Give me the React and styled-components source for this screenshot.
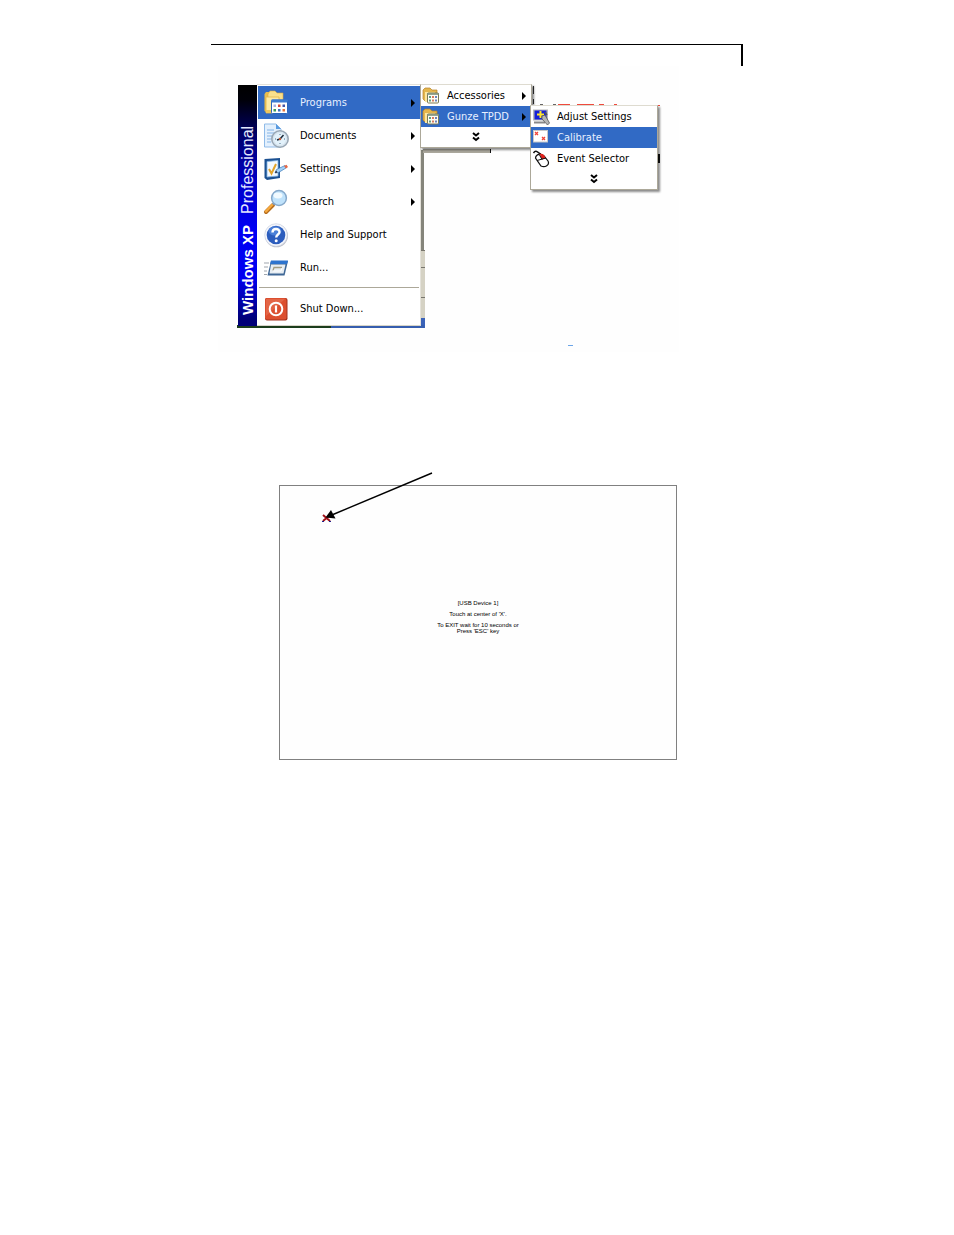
import styled, { createGlobalStyle } from "styled-components";

const ProgramsIcon = () => (
  <svg viewBox="0 0 26 26" aria-hidden="true">
    <path d="M1.500 4 L3 2 H8 L10 4 H12 V22 H3 L1.500 21 Z" fill="#e8bd4e" />
    <path d="M5 4 L7 1 H12 L14 3 H20 V16 H5 Z" fill="#f9e08c" stroke="#dba93c" strokeWidth="0.6" />
    <path d="M3 7 H16 V23 H3 Z" fill="#fdeaa4" stroke="#e2b54a" strokeWidth="0.8" />
    <path d="M3 20 L16 20 V23 H3 Z" fill="#f0c75d" />
    <rect x="8.500" y="10" width="16" height="13.500" rx="1" fill="#fff" stroke="#2c66bd" strokeWidth="1" />
    <rect x="8.500" y="9.500" width="16" height="3" fill="#3c7bd2" />
    <rect x="10.500" y="14.500" width="2.500" height="2.500" fill="#a9b1e6" />
    <rect x="15" y="14.500" width="2.500" height="2.500" fill="#d3473a" />
    <rect x="19.500" y="14.500" width="2.500" height="2.500" fill="#4456a8" />
    <rect x="10.500" y="19" width="2.500" height="2.500" fill="#3f9a55" />
    <rect x="15" y="19" width="2.500" height="2.500" fill="#3f6fc0" />
    <rect x="19.500" y="19" width="2.500" height="2.500" fill="#e6733a" />
  </svg>
);

const DocumentsIcon = () => (
  <svg viewBox="0 0 26 26" aria-hidden="true">
    <path d="M1.500 1 H13 L18 6 V24 H1.500 Z" fill="#e3f0fd" stroke="#90bbe8" strokeWidth="1" />
    <path d="M13 1 V6 H18 Z" fill="#5a9be0" />
    <path d="M4 7 H11 M4 10 H14 M4 13 H10 M4 16 H8 M4 19 H8" stroke="#86b4e6" strokeWidth="1.200" />
    <circle cx="17" cy="16" r="8.200" fill="#d8e5ef" stroke="#9aa8b5" strokeWidth="1.600" />
    <circle cx="17" cy="16" r="6" fill="#e3f2fb" />
    <path d="M17 11 V12 M17 20 V21 M12 16 H13 M21 16 H22" stroke="#52708b" strokeWidth="1" />
    <path d="M20.500 12 L17 16 L14 17" fill="none" stroke="#1d2c3c" strokeWidth="1.500" />
    <circle cx="17" cy="16" r="1.200" fill="#c25b35" />
  </svg>
);

const SettingsIcon = () => (
  <svg viewBox="0 0 26 26" aria-hidden="true">
    <path d="M1.500 3 L17 2 V22 L4 24 L1.500 22 Z" fill="#1c5192" />
    <path d="M4 5.500 L15 4.500 V20 L4 21 Z" fill="#f5faff" stroke="#82b2e3" strokeWidth="0.800" />
    <path d="M6 13 L8.500 17.500 L13 8" fill="none" stroke="#e2a52c" strokeWidth="2" />
    <path d="M12 17 L13.500 13.500 L22 9.500 L23 12 L15.500 16.500 Z" fill="#a3d0f7" stroke="#3978b8" strokeWidth="0.700" />
    <path d="M21 10 L23.500 8.800 L25 11 L23 12.500 Z" fill="#e66845" />
    <path d="M12 17 L13 14.500 L14.500 16.500 Z" fill="#223" />
  </svg>
);

const SearchIcon = () => (
  <svg viewBox="0 0 26 26" aria-hidden="true">
    <path d="M3 23 L10 16" stroke="#b46c1d" strokeWidth="4" strokeLinecap="round" />
    <path d="M3 22.400 L9.500 15.500" stroke="#f6a93e" strokeWidth="2.400" strokeLinecap="round" />
    <path d="M10 15.500 L12 13.500" stroke="#8495a8" strokeWidth="3" />
    <circle cx="16" cy="9" r="7.400" fill="#bfe2fb" stroke="#86a9cb" strokeWidth="1.500" />
    <ellipse cx="15" cy="6.500" rx="4.500" ry="3" fill="#f1faff" />
  </svg>
);

const HelpIcon = () => (
  <svg viewBox="0 0 26 26" aria-hidden="true">
    <circle cx="13.500" cy="13.800" r="11.500" fill="#c0c3cb" />
    <circle cx="13" cy="13" r="11.300" fill="#f4f6fb" stroke="#c4cbdc" strokeWidth="0.600" />
    <circle cx="13" cy="13" r="9.300" fill="#2c5dbd" />
    <ellipse cx="12" cy="9" rx="6.500" ry="4.500" fill="#4b80d8" />
    <path d="M9.500 10.500 C9.500 5.800 16.500 6 16.500 10 C16.500 12.500 13.200 12.500 13.200 15.500" fill="none" stroke="#fff" strokeWidth="2.400" />
    <circle cx="13.200" cy="18.800" r="1.500" fill="#fff" />
  </svg>
);

const RunIcon = () => (
  <svg viewBox="0 0 26 26" aria-hidden="true">
    <path d="M1 8 H6 M1 12 H5 M1 16 H4 M1 19.500 H4" stroke="#9fa5ad" strokeWidth="1.200" />
    <path d="M8 6 H25 L21.500 20.500 H4.500 Z" fill="#3e6796" />
    <path d="M8 5.500 H25 L24 9 H7 Z" fill="#2c73ce" />
    <path d="M8 9.500 H22.500 L20.500 18.500 H6.500 Z" fill="#e7edf2" />
    <path d="M10 15.500 L11 12.500 H19" fill="none" stroke="#a19c83" strokeWidth="1.300" />
    <path d="M10 16 H18 L19 13" fill="none" stroke="#fff" strokeWidth="1" />
  </svg>
);

const ShutDownIcon = () => (
  <svg viewBox="0 0 26 26" aria-hidden="true">
    <rect x="2" y="2" width="22.500" height="22.500" rx="2" fill="#a5311c" />
    <rect x="2" y="2" width="21.500" height="21.500" rx="2" fill="#dc4f2f" />
    <path d="M3 3 H22 L3 20 Z" fill="#e87556" opacity="0.600" />
    <circle cx="13" cy="13" r="6.300" fill="none" stroke="#fff" strokeWidth="2" />
    <path d="M13 9.500 V16.500" stroke="#fff" strokeWidth="2.200" />
  </svg>
);

const FolderIcon = () => (
  <svg viewBox="0 0 18 18" aria-hidden="true">
    <path d="M1 3 L3 1 H8 L10 3 H15 V14 H3 L1 12 Z" fill="#e4b64d" stroke="#b4822b" strokeWidth="0.700" />
    <path d="M3 5 H13 V15 H3 Z" fill="#fce7a0" />
    <rect x="5.500" y="6" width="11" height="10" rx="1" fill="#fffef2" stroke="#7c7a55" strokeWidth="1" />
    <path d="M5 7 H17" stroke="#7e8f78" strokeWidth="1.600" />
    <path d="M8 9 V11 M8 12.500 V14.500" stroke="#37866a" strokeWidth="1.600" />
    <path d="M11 9 V11 M11 12.500 V14.500" stroke="#cf5c3d" strokeWidth="1.600" />
    <path d="M14 9 V11 M14 12.500 V14.500" stroke="#4567b5" strokeWidth="1.600" />
  </svg>
);

const AdjustIcon = () => (
  <svg viewBox="0 0 18 18" aria-hidden="true">
    <rect x="1" y="1.500" width="15" height="11" fill="#b9b9b9" />
    <rect x="2.500" y="2.500" width="12" height="9" fill="#1520d6" />
    <path d="M2 14.500 H13" stroke="#888" strokeWidth="2" />
    <path d="M8.500 3 V10 M5 6.500 H12" stroke="#ffe52e" strokeWidth="2" />
    <path d="M10 8 L13 7 L17.500 15 L15.500 17 L10 11 Z" fill="#b5b5b5" stroke="#555" strokeWidth="0.800" />
    <path d="M13 4 L15 7" stroke="#555" strokeWidth="1.400" />
  </svg>
);

const CalibrateIcon = () => (
  <svg viewBox="0 0 18 18" aria-hidden="true">
    <rect x="1" y="1" width="15" height="12.500" fill="#c8c8c8" />
    <rect x="2" y="2" width="13" height="10.500" fill="#fff" />
    <path d="M3 3 L6 6 M6 3 L3 6 M10 8 L13 11 M13 8 L10 11" stroke="#f04438" strokeWidth="1.300" />
  </svg>
);

const EventIcon = () => (
  <svg viewBox="0 0 18 18" aria-hidden="true">
    <path d="M1.500 3 C4 -1 6 3 9 4" fill="none" stroke="#111" strokeWidth="1.500" />
    <path d="M3.500 8 C4 4 9 3 12 6 L16 11 C18 15 13 18 9 16 Z" fill="#fff" stroke="#111" strokeWidth="1.200" />
    <path d="M7.500 4 C10 3 12.500 4.500 13.500 8 L10 9.500 Z" fill="#e0221c" />
    <path d="M5 10.500 L14 8 M7.500 5 L10 9.500" stroke="#111" strokeWidth="1" />
  </svg>
);

const DoubleChevron = () => (
  <svg width="8" height="10" viewBox="0 0 8 10" aria-hidden="true">
    <path d="M1 1 L4 3.500 L7 1 M1 5.500 L4 8 L7 5.500" fill="none" stroke="#000" strokeWidth="2" />
  </svg>
);

const mainItems = [
  { label: "Documents", Icon: DocumentsIcon, more: true },
  { label: "Settings", Icon: SettingsIcon, more: true },
  { label: "Search", Icon: SearchIcon, more: true },
  { label: "Help and Support", Icon: HelpIcon },
  { label: "Run...", Icon: RunIcon },
];

const gunzeItems = [
  { label: "Adjust Settings", Icon: AdjustIcon },
  { label: "Calibrate", Icon: CalibrateIcon, active: true },
  { label: "Event Selector", Icon: EventIcon },
];

const MenuItem = ({ label, Icon, more, active, small, children }) => {
  return (
    <Item>
      <ItemButton type="button" $active={active} $small={small}>
        <IconBox $small={small}>
          <Icon />
        </IconBox>
        <span>{label}</span>
        {more && <Arrow />}
      </ItemButton>
      {children}
    </Item>
  );
};

const MoreButton = () => (
  <Item>
    <Expand type="button" aria-label="Show more">
      <DoubleChevron />
    </Expand>
  </Item>
);

// pieces of the desktop still showing around the menus
const Desktop = () => (
  <Backdrop viewBox="0 0 468 286" aria-hidden="true">
    <rect x="7" y="0" width="461" height="286" fill="#fefefe" />
    <rect x="210" y="84" width="3" height="100" fill="#85857b" />
    <rect x="210" y="184" width="4" height="68" fill="#d5d2c4" />
    <path d="M210 184.500 H214 M210 201.500 H214 M210 231.500 H214" stroke="#77756c" />
    <rect x="210" y="252" width="4" height="10" fill="#3a62b8" />
    <rect x="26" y="259" width="94" height="3" fill="#1c3d1c" />
    <rect x="120" y="259" width="93" height="3" fill="#365eae" />
    <rect x="212" y="83" width="68" height="4" fill="#aaa79c" />
    <rect x="279" y="83" width="1" height="4" fill="#111" />
    <path d="M295 18.500 H315" stroke="#99978c" />
    <path d="M322.500 20 V28 M322.500 33 V38" stroke="#333" />
    <path d="M329 38.500 H332 M342 38.500 H345" stroke="#666" />
    <path d="M347 38.500 H359 M366 38.500 H383 M388 38.500 H393 M403 38.500 H406 M444 39.500 H449" stroke="#ef4a3d" />
    <path d="M448 88 V97" stroke="#111" strokeWidth="2" />
    <rect x="357" y="279" width="5" height="1" fill="#6ba5e8" />
  </Backdrop>
);

const App = () => {
  return (
    <>
      <GlobalStyle />
      <Page>
        <TopRule />

        <MenuFigure>
          <Desktop />
          <StartMenu>
            <Banner>
              <BannerText>
                <strong>Windows XP</strong>
                <span>Professional</span>
              </BannerText>
            </Banner>
            <MainList>
              <MenuItem label="Programs" Icon={ProgramsIcon} more active>
                <SubMenu $width={112} $top={-2}>
                  <MenuItem label="Accessories" Icon={FolderIcon} more small />
                  <MenuItem label="Gunze TPDD" Icon={FolderIcon} more small active>
                    <SubMenu $width={128} $top={-1} $overlap={1}>
                      {gunzeItems.map((curItem) => {
                        return <MenuItem key={curItem.label} {...curItem} small />;
                      })}
                      <MoreButton />
                    </SubMenu>
                  </MenuItem>
                  <MoreButton />
                </SubMenu>
              </MenuItem>
              {mainItems.map((curItem) => {
                return <MenuItem key={curItem.label} {...curItem} />;
              })}
              <Separator />
              <MenuItem label="Shut Down..." Icon={ShutDownIcon} />
            </MainList>
          </StartMenu>
        </MenuFigure>

        <Calibration>
          <Pointer viewBox="0 0 160 50" width="160" height="50" aria-hidden="true">
            <path d="M44 31 L51 37 M51 31 L44 37" stroke="#a01018" strokeWidth="2" />
            <path d="M43 37.500 H45 M50 37.500 H52" stroke="#20208a" />
            <path d="M153 -11 L54 30.500" stroke="#000" strokeWidth="1.400" />
            <path d="M46.500 33.500 L52 26 L56.500 34.500 Z" fill="#000" />
          </Pointer>
          <p>[USB Device 1]</p>
          <p>Touch at center of 'X'.</p>
          <p>
            To EXIT wait for 10 seconds or
            <br />
            Press 'ESC' key
          </p>
        </Calibration>
      </Page>
    </>
  );
};

const GlobalStyle = createGlobalStyle`
  * {
    box-sizing: border-box;
  }

  body {
    margin: 0;
    background: #fff;
    color: #000;
    font-family: "DejaVu Sans Condensed", "DejaVu Sans", sans-serif;
    font-size: 11px;
  }
`;

const Page = styled.main`
  width: 100%;
  max-width: 532px;
  min-height: 100vh;
  margin: 0 auto;
  padding-top: 44px;
`;

const TopRule = styled.div`
  height: 22px;
  border-top: 1px solid #000;
  border-right: 2px solid #000;
`;

const MenuFigure = styled.section`
  position: relative;
  padding: 18px 0 24px 27px;
`;

const Backdrop = styled.svg`
  position: absolute;
  top: 0;
  left: 0;
  width: 468px;
  height: 286px;
`;

const StartMenu = styled.nav`
  position: relative;
  display: grid;
  grid-template-columns: 19px 1fr;
  width: 183px;
`;

const Banner = styled.div`
  display: flex;
  align-items: flex-end;
  justify-content: center;
  padding-bottom: 11px;
  margin-top: 1px;
  background: linear-gradient(#000 0%, #000008 6%, #000070 22%, #0000c8 40%, #0000f4 60%, #0000f0 80%, #000078 97%);
`;

const BannerText = styled.div`
  display: flex;
  gap: 11px;
  writing-mode: vertical-rl;
  transform: rotate(180deg);
  color: #fff;
  font-family: "Liberation Sans", Arial, sans-serif;
  font-size: 16px;
  line-height: 19px;
  white-space: nowrap;

  strong {
    font-size: 15px;
  }

  span {
    color: #e4e9ff;
  }
`;

const MainList = styled.ul`
  margin: 0;
  padding: 1px 0 0 1px;
  list-style: none;
  background: #fff;
  border-top: 1px solid #e4e2da;
  border-right: 1px solid #e4e2da;
  border-bottom: 1px solid #d8d5c8;
`;

const Item = styled.li`
  position: relative;
`;

const ItemButton = styled.button`
  display: flex;
  align-items: center;
  gap: ${({ $small }) => ($small ? "7px" : "11px")};
  width: 100%;
  height: ${({ $small }) => ($small ? "21px" : "33px")};
  padding: ${({ $small }) => ($small ? "0 5px 0 1px" : "0 5px")};
  border: none;
  background: ${({ $active }) => ($active ? "#316ac5" : "transparent")};
  color: ${({ $active }) => ($active ? "#e8f0ff" : "#000")};
  font: inherit;
  white-space: nowrap;
  cursor: pointer;
`;

const IconBox = styled.span`
  flex: none;
  width: ${({ $small }) => ($small ? "18px" : "26px")};
  height: ${({ $small }) => ($small ? "18px" : "26px")};

  svg {
    display: block;
    width: 100%;
    height: 100%;
  }
`;

const Arrow = styled.span`
  margin-left: auto;
  border-left: 4px solid #000;
  border-top: 4px solid transparent;
  border-bottom: 4px solid transparent;
`;

const Separator = styled.li`
  height: 8px;
  margin: 0 1px;
  background: linear-gradient(#aca899, #aca899) 0 3px / 100% 1px no-repeat;
`;

const SubMenu = styled.ul`
  position: absolute;
  z-index: 1;
  top: ${({ $top }) => $top}px;
  left: calc(100% - ${({ $overlap = 0 }) => $overlap}px);
  width: ${({ $width }) => $width}px;
  margin: 0;
  padding: 0;
  list-style: none;
  background: #fff;
  border: 1px solid #aca899;
  border-top-color: #dedbd0;
  box-shadow: 2px 2px 2px rgba(0, 0, 0, 0.45);
`;

const Expand = styled.button`
  display: flex;
  align-items: center;
  justify-content: center;
  width: 100%;
  height: 20px;
  padding: 0;
  border: none;
  background: transparent;
  cursor: pointer;
`;

const Calibration = styled.section`
  position: relative;
  display: flex;
  flex-direction: column;
  align-items: center;
  justify-content: center;
  gap: 5px;
  width: 398px;
  max-width: 100%;
  min-height: 275px;
  margin: 135px 0 0 68px;
  padding-bottom: 12px;
  background: #fefefe;
  border: 1px solid #808080;
  font-family: "Liberation Sans", Arial, sans-serif;
  font-size: 6px;
  line-height: 6px;
  text-align: center;

  p {
    margin: 0;
  }
`;

const Pointer = styled.svg`
  position: absolute;
  top: -2px;
  left: -1px;
  overflow: visible;
`;

export default App;
